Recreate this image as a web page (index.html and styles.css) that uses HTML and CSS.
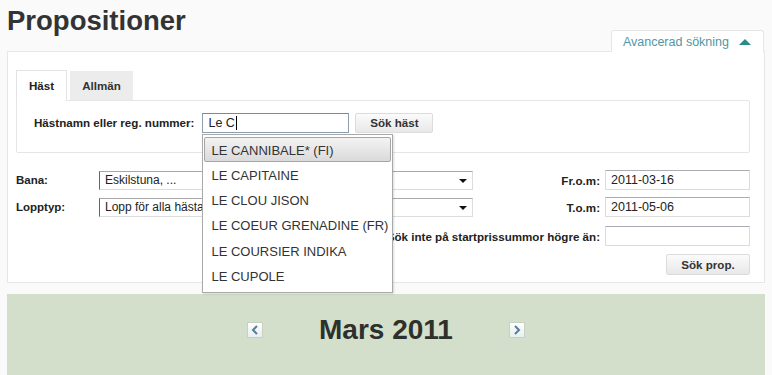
FILE: index.html
```html
<!DOCTYPE html>
<html lang="sv">
<head>
  <meta charset="UTF-8">
  <meta name="viewport" content="width=device-width, initial-scale=1.0">
  <link rel="stylesheet" href="styles.css">
  <title>Propositioner</title>
</head>
<body>
  <div class="page">
    <header class="head">
      <h1 class="title">Propositioner</h1>
      <a class="adv-tab" href="#">Avancerad sökning <span class="caret-up"></span></a>
    </header>

    <section class="panel">
      <ul class="tabs">
        <li class="tab active">Häst</li>
        <li class="tab">Allmän</li>
      </ul>
      <div class="tab-body">
        <span class="lbl">Hästnamn eller reg. nummer:</span>
        <div class="ac">
          <div class="field horse">Le C<span class="cursor"></span></div>
          <ul class="ac-list">
            <li class="ac-item selected">LE CANNIBALE* (FI)</li>
            <li class="ac-item">LE CAPITAINE</li>
            <li class="ac-item">LE CLOU JISON</li>
            <li class="ac-item">LE COEUR GRENADINE (FR)</li>
            <li class="ac-item">LE COURSIER INDIKA</li>
            <li class="ac-item">LE CUPOLE</li>
          </ul>
        </div>
        <button class="btn btn-horse">Sök häst</button>
      </div>

      <div class="filters">
        <div class="row">
          <span class="lbl row-lbl">Bana:</span>
          <div class="select">Eskilstuna, ...</div>
          <span class="lbl date-lbl">Fr.o.m:</span>
          <div class="field date">2011-03-16</div>
        </div>
        <div class="row">
          <span class="lbl row-lbl">Lopptyp:</span>
          <div class="select">Lopp för alla hästar</div>
          <span class="lbl date-lbl">T.o.m:</span>
          <div class="field date">2011-05-06</div>
        </div>
        <div class="row row-end">
          <span class="lbl date-lbl">Sök inte på startprissummor högre än:</span>
          <div class="field date"></div>
        </div>
        <div class="row row-end">
          <button class="btn btn-prop">Sök prop.</button>
        </div>
      </div>
    </section>

    <section class="cal">
      <div class="cal-head">
        <a class="nav" href="#">
          <svg width="8" height="10" viewBox="0 0 8 10"><polyline points="6,1 2,5 6,9" fill="none" stroke="#557d9c" stroke-width="2"/></svg>
        </a>
        <h2 class="month">Mars 2011</h2>
        <a class="nav" href="#">
          <svg width="8" height="10" viewBox="0 0 8 10"><polyline points="2,1 6,5 2,9" fill="none" stroke="#557d9c" stroke-width="2"/></svg>
        </a>
      </div>
    </section>
  </div>
</body>
</html>
```

FILE: styles.css
```css
body {
  margin: 0;
  font-family: "Liberation Sans", Arial, sans-serif;
  font-size: 12px;
  color: #333;
  background: #fafafa;
}

.page {
  padding: 0 7px;
}

.head {
  display: flex;
  justify-content: space-between;
  align-items: flex-end;
  height: 51px;
}

.title {
  align-self: flex-start;
  margin: 0;
  padding-top: 5px;
  font-size: 27.5px;
  line-height: 32px;
  color: #333;
}

.adv-tab {
  position: relative;
  z-index: 1;
  display: flex;
  align-items: center;
  gap: 10px;
  box-sizing: border-box;
  height: 22px;
  margin: 0 1px -1px 0;
  padding: 0 12px 0 11px;
  background: #fff;
  border: 1px solid #e6e6e6;
  border-bottom: none;
  border-radius: 3px 3px 0 0;
  color: #4f98a4;
  font-size: 12.5px;
  text-decoration: none;
}

.caret-up {
  width: 0;
  height: 0;
  border-left: 6px solid transparent;
  border-right: 6px solid transparent;
  border-bottom: 6px solid #2b8a8e;
}

.panel {
  background: #fff;
  border: 1px solid #e6e6e6;
  padding: 18px 14px 8px 8px;
}

.tabs {
  display: flex;
  gap: 3px;
  margin: 0;
  padding: 0;
  list-style: none;
  font-size: 11.6px;
}

.tab {
  box-sizing: border-box;
  height: 29px;
  margin-top: 1px;
  padding: 0 12px;
  line-height: 29px;
  font-weight: bold;
  background: #ececec;
}

.tab.active {
  position: relative;
  z-index: 1;
  height: 31px;
  margin: 0 0 -1px;
  line-height: 29px;
  background: #fff;
  border: 1px solid #e3e3e3;
  border-bottom: none;
  color: #222;
}

.tab-body {
  display: flex;
  align-items: center;
  height: 53px;
  padding: 0 0 8px 17px;
  box-sizing: border-box;
  border: 1px solid #e6e6e6;
  border-radius: 0 2px 2px 2px;
}

.lbl {
  font-weight: bold;
  font-size: 11.6px;
  color: #222;
}

.ac {
  position: relative;
  margin-left: 8px;
}

.field {
  box-sizing: border-box;
  height: 20px;
  padding: 0 5px;
  line-height: 18px;
  font-size: 12.5px;
  color: #222;
  background: #fff;
  border: 1px solid #dcdcdc;
  border-top-color: #abadb3;
}

.horse {
  width: 147px;
  border-color: #8e9db1;
  border-top-color: #7a8a9e;
}

.cursor {
  display: inline-block;
  width: 1px;
  height: 14px;
  margin-left: 1px;
  vertical-align: -3px;
  background: #000;
}

.ac-list {
  position: absolute;
  z-index: 5;
  top: 21px;
  left: 0;
  width: 191px;
  box-sizing: border-box;
  margin: 0;
  padding: 2px 1px 4px;
  list-style: none;
  background: #fff;
  border: 1px solid #a9a9a9;
  box-shadow: 1px 1px 2px rgba(0, 0, 0, 0.15);
}

.ac-item {
  height: 25.3px;
  padding: 0 6px;
  line-height: 25px;
  font-size: 13px;
  color: #333;
  white-space: nowrap;
  border: 1px solid transparent;
  box-sizing: border-box;
}

.ac-item.selected {
  background: linear-gradient(#f3f3f3, #dadada);
  border-color: #a6a6a6;
  border-radius: 2px;
}

.btn {
  box-sizing: border-box;
  font-family: inherit;
  font-size: 11.6px;
  font-weight: bold;
  color: #333;
  background: linear-gradient(#fbfbfb, #e8e8e8);
  border: 1px solid #dcdcdc;
  border-radius: 2px;
}

.btn-horse {
  width: 78px;
  height: 20px;
  margin-left: 6px;
}

.filters {
  margin-top: 17px;
}

.row {
  display: flex;
  align-items: center;
  height: 20px;
  margin-bottom: 7px;
}

.row:nth-child(3) {
  margin-top: 9px;
  margin-bottom: 8px;
}

.row:last-child {
  margin-bottom: 0;
}

.row-end {
  justify-content: flex-end;
}

.row-lbl {
  width: 83px;
  font-size: 11.5px;
}

.select {
  position: relative;
  box-sizing: border-box;
  width: 374px;
  height: 19px;
  padding: 0 5px;
  line-height: 17px;
  color: #222;
  background: #fff;
  border: 1px solid #dcdcdc;
  border-top-color: #a8a8a8;
  border-left-color: #666;
}

.select::after {
  content: "";
  position: absolute;
  top: 7px;
  right: 5px;
  border-left: 4px solid transparent;
  border-right: 4px solid transparent;
  border-top: 4px solid #111;
}

.date-lbl {
  margin-left: auto;
  margin-right: 5px;
}

.date {
  width: 145px;
}

.btn-prop {
  width: 84px;
  height: 21px;
}

.cal {
  box-sizing: border-box;
  height: 81px;
  margin-top: 11px;
  padding-top: 19px;
  background: #d3dfca;
}

.cal-head {
  display: flex;
  justify-content: center;
  align-items: center;
  gap: 56px;
}

.month {
  margin: 0;
  font-size: 28px;
  line-height: 34px;
  color: #2d302b;
}

.nav {
  display: flex;
  align-items: center;
  justify-content: center;
  width: 16px;
  height: 16px;
  box-sizing: border-box;
  background: linear-gradient(#ffffff, #e9eeee);
  border: 1px solid #c6d1c3;
}
```
